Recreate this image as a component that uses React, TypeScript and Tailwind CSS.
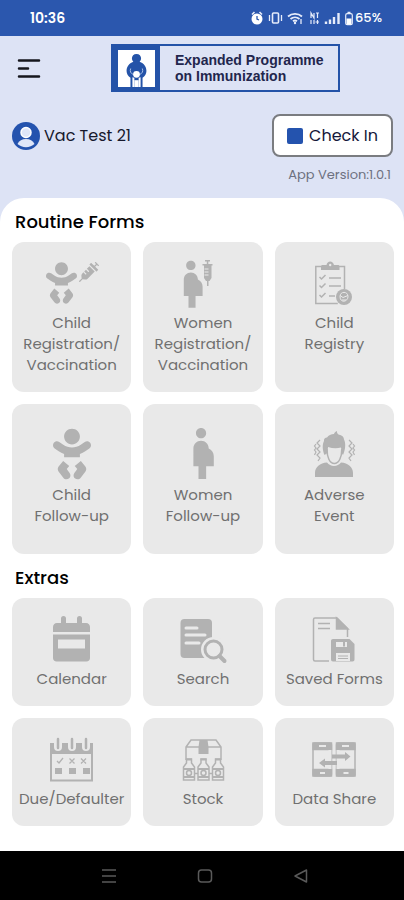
import React from 'react';
import { FaBaby, FaSyringe } from 'react-icons/fa';

interface Tile {
  label: string;
  icon: React.ReactNode;
}

const PREGNANT_PATH =
  'M9 4c0-1.11.89-2 2-2s2 .89 2 2-.89 2-2 2-2-.89-2-2zm7 9c-.01-1.34-.83-2.51-2-3 0-1.66-1.34-3-3-3s-3 1.34-3 3v7h2v5h3v-5h3v-4z';

/* ---------- Status bar ---------- */

const StatusIcons = () => (
  <svg width="104" height="18" viewBox="0 0 104 18" fill="none" stroke="#e6ecfa" aria-hidden="true">
    {/* alarm */}
    <circle cx="6" cy="10" r="5.5" fill="#fff" stroke="none" />
    <path d="M1 5.5 3.5 3M11 5.5 8.5 3" strokeWidth="1.6" />
    <path d="M6 7v3l2 1" stroke="#2b57ae" strokeWidth="1.3" />
    {/* vibrate */}
    <path d="M18.5 6v6M30.5 6v6" strokeWidth="1.3" />
    <rect x="21.5" y="4" width="6" height="10" rx="1" strokeWidth="1.6" />
    {/* wifi */}
    <path d="M37 7.5c4-3.6 10-3.6 14 0M39.5 10c2.6-2.3 6.4-2.3 9 0M42 12.3c1.2-1 2.8-1 4 0" strokeWidth="1.8" />
    <circle cx="44" cy="14" r="1.2" fill="#e6ecfa" stroke="none" />
    <path d="M50 10v5" strokeWidth="1.3" />
    {/* volte */}
    <path d="M60 9V4l3 5V4M65 4h3M66.5 4v5M60 15v-4M63 11v4M66.5 11v4M64.5 13h3.5" strokeWidth="1.2" />
    {/* signal */}
    <path d="M75 15v-2.5M79 15v-4.5M83 15V8M87.5 15V4" strokeWidth="2.4" />
    {/* battery */}
    <rect x="94.7" y="4.7" width="6.6" height="11" rx="1.5" strokeWidth="1.2" />
    <path d="M96.500 3.500h3" strokeWidth="1.500" />
    <rect x="95.5" y="9.5" width="5" height="6" fill="#fff" stroke="none" />
  </svg>
);

const StatusBar = () => (
  <div className="flex h-9 items-center justify-between bg-[#2b57ae] pr-[22px] pl-[30px] text-sm font-semibold text-white">
    <span>10:36</span>
    <span className="flex items-center">
      <StatusIcons />
      <span className="text-[13px] font-medium">65%</span>
    </span>
  </div>
);

/* ---------- Header ---------- */

const EpiLogo = () => (
  <div className="mr-16 flex h-12 flex-1 border-2 border-[#2453a8]">
    <div className="flex w-[47px] shrink-0 items-center justify-center bg-[#2453a8]">
      <svg width="37" height="37" viewBox="0 0 38 38" aria-hidden="true">
        <rect width="38" height="38" fill="#fff" />
        <path d="M19 4c3 0 4.700 2 4.700 4.600 0 1.500-.6 2.700-1.500 3.500 4.600 1.700 7 5.400 7 9.400 0 3-1.700 5.500-4 7V38h-2V28l-2 .5V38h-4.400v-9.500l-2-.5v10h-2v-9.500c-2.300-1.500-4-4-4-7 0-4 2.400-7.700 7-9.400-.9-.8-1.500-2-1.500-3.500C14.300 6 16 4 19 4Z" fill="#2453a8" />
        <path d="M16.800 31h4.400v7h-4.400z" fill="#fff" />
        <circle cx="19" cy="25" r="3.500" fill="#fff" />
        <path d="M13 19c-1 3 0 5 2.500 6M25 19c1 3 0 5-2.500 6" stroke="#a9bfe6" strokeWidth="1" fill="none" />
      </svg>
    </div>
    <p className="self-center pl-[15px] font-['Liberation_Sans',Arial,sans-serif] text-sm leading-4 font-bold whitespace-nowrap text-[#22264d]">
      Expanded Programme
      <br />
      on Immunization
    </p>
  </div>
);

const Avatar = () => (
  <svg width="28" height="28" viewBox="0 0 28 28" aria-hidden="true">
    <circle cx="14" cy="14" r="14" fill="#2453ae" />
    <circle cx="14" cy="10.5" r="5" fill="#dfe6f8" stroke="#fff" strokeWidth="1.5" />
    <path d="M5.500 22c1.500-3.500 4.700-5 8.500-5s7 1.500 8.500 5c-2.200 2-5.200 3.200-8.500 3.200S7.700 24 5.500 22Z" fill="#dfe6f8" />
  </svg>
);

const Header = () => (
  <header className="flex flex-col">
    <div className="flex items-center gap-[70px] pt-2 pl-[17px]">
      <button aria-label="Menu">
        <svg width="24" height="24" viewBox="0 0 24 24" stroke="#15161c" strokeWidth="2.5" strokeLinecap="round">
          <path d="M2 4.500h20M2 12.500h9M2 20.500h20" />
        </svg>
      </button>
      <EpiLogo />
    </div>

    <div className="mt-[22px] flex items-center justify-between pr-[11px] pl-3">
      <div className="flex items-center gap-1 text-base text-[#16182c]">
        <Avatar />
        <span>Vac Test 21</span>
      </div>
      <button className="flex h-[43px] items-center gap-1.5 rounded-lg border-2 border-[#7a7c80] bg-white px-[13px] text-base text-[#14173a]">
        <span className="h-4 w-4 rounded-xs bg-[#2453ae]" />
        Check In
      </button>
    </div>

    <p className="mt-2 pr-[13px] text-right text-[13px] leading-5 text-[#6d7180]">App Version:1.0.1</p>
  </header>
);

/* ---------- Tile icons ---------- */

const IconChildVaccine = () => (
  <div className="flex h-[52px] items-start gap-0.5 pt-1 pl-0.5">
    <FaBaby className="h-[42px] w-[31px]" />
    <FaSyringe className="h-[20px] w-[20px]" />
  </div>
);

const IconWomanVaccine = () => (
  <svg width="64" height="52" viewBox="0 0 64 52" fill="currentColor">
    <path transform="translate(-6 -2) scale(2.35)" d={PREGNANT_PATH} />
    <path d="M34 2h5v1.500h-5zM35.800 3h1.500v3h-1.500zM31.500 6h10v1.500h-10zM33 7.500h7.500V20l-2 3H35l-2-3zM36 23h1.500v5H36z" />
    <path d="M33.500 11h4M33.500 14h4M33.500 17h4" stroke="#e9e9e9" strokeWidth="1.2" />
  </svg>
);

const IconRegistry = () => (
  <svg width="64" height="52" viewBox="0 0 64 52" fill="none" stroke="currentColor" strokeWidth="1.5">
    <path d="M20 8.500h-6.200v37h22M36 8.500h6.500V31" />
    <path d="M19 12V8.500c0-.8.700-1.500 1.500-1.500h4C25 4.800 26.300 3.500 28.200 3.500S31.400 4.800 32 7h4c.8 0 1.500.7 1.500 1.500V12Z" fill="currentColor" stroke="none" />
    <circle cx="28.2" cy="7" r="1.2" fill="#e9e9e9" stroke="none" />
    <path d="m17.500 19 2 2 4-4M17.500 27.500l2 2 4-4M17.500 37l2 2 4-4M27 20h12M27 28h12M27 38h6" />
    <circle cx="42" cy="39" r="8" fill="currentColor" stroke="none" />
    <path d="M38 38.500c0-5.500 8-5.500 8 0s-8 7-8 0ZM38 37.500l3 2 5-2M40 42h4" stroke="#e9e9e9" strokeWidth="1" />
  </svg>
);

const IconBaby = () => (
  <div className="h-14 pt-0.5">
    <FaBaby className="h-[52px] w-[38px]" />
  </div>
);

const IconWoman = () => (
  <svg width="64" height="56" viewBox="0 0 64 56" fill="currentColor">
    <path transform="translate(2 -3) scale(2.55)" d={PREGNANT_PATH} />
  </svg>
);

const IconAdverse = () => (
  <svg width="64" height="56" viewBox="0 0 64 56" fill="currentColor">
    <path d="M13 51v-4c0-6 5-10 12-10.500 1.800 2.300 4.200 3.500 7 3.500s5.200-1.200 7-3.500c7 .5 12 4.500 12 10.500v4Z" />
    <path d="M22.500 29c-2-5-2.500-10-.5-14-.3-2 1-3.500 3-3.500 1.500-2.300 4-3.500 7-3.500.3-1.500 1.500-2.500 3-3-.2 1.500.3 2.500 1.500 3.500 3.500.5 5.500 2.500 5.500 5 2 4 1.500 10-1 15.500L39.500 27c0-2 0-4-.6-5.500-3.500 1-8.500 1-12.800-.5-.6 2-.6 4-.6 6Z" />
    <path d="M25 23c0 8 2.500 14.500 7.300 14.500S39.800 31 39.800 23" fill="none" stroke="currentColor" strokeWidth="1.5" />
    <path d="m18 14-3 3 3 3-3 3 3 3-3 3 3 3-2 3M14 18l-1.500 2 1.500 2-1.500 2 1.500 2-1.500 3M47 14l3 3-3 3 3 3-3 3 3 3-3 3 2 3M51 18l1.500 2-1.500 2 1.500 2-1.500 2 1.500 3" fill="none" stroke="currentColor" strokeWidth="1.2" />
  </svg>
);

const IconCalendar = () => (
  <svg width="64" height="56" viewBox="0 0 64 56" fill="currentColor">
    <path d="M13 22v-5c0-2 1.500-4 4-4h4V8.500a1.500 1.500 0 0 1 5 0V13h11V8.500a1.500 1.500 0 0 1 5 0V13h4c2.500 0 4 2 4 4v5Z" />
    <path fillRule="evenodd" d="M13 24.500h37V48c0 2-1.500 3.500-3.500 3.500h-30c-2 0-3.500-1.500-3.500-3.500ZM18 29.500v9h27v-9Z" />
  </svg>
);

const IconSearchDoc = () => (
  <svg width="64" height="56" viewBox="0 0 64 56" fill="currentColor">
    <rect x="9.5" y="9" width="31.5" height="39" rx="4" />
    <path d="M15 18h11M15 25h19M15 33h13" stroke="#e9e9e9" strokeWidth="3" strokeLinecap="round" />
    <circle cx="42.5" cy="39.5" r="12.5" fill="#e9e9e9" />
    <circle cx="42.5" cy="39.5" r="8.5" fill="#e9e9e9" stroke="currentColor" strokeWidth="3" />
    <path d="m48.500 46 5 5" stroke="currentColor" strokeWidth="4" strokeLinecap="round" />
  </svg>
);

const IconSavedForms = () => (
  <svg width="64" height="56" viewBox="0 0 64 56" fill="none" stroke="currentColor" strokeWidth="1.5">
    <path d="M27 51H13c-1 0-1.500-.5-1.500-1.500V9.500c0-1 .5-1.500 1.500-1.500h22l10.500 10.500V27" />
    <path d="M34.500 8v11H46Z" fill="currentColor" />
    <path d="M16 13.500h12M16 18.500h12" />
    <path d="M31 29h16.500l5 5v15.500c0 1.200-.8 2-2 2H31c-1.200 0-2-.8-2-2V31c0-1.200.8-2 2-2Z" fill="currentColor" stroke="none" />
    <path d="M34 32h11v5H34zM34 43h14v8H34z" fill="#e9e9e9" stroke="none" />
    <path d="M36 46h10M36 48.500h10" strokeWidth="1" />
    <path d="M42 31.500v5" strokeWidth="2" />
  </svg>
);

const IconDue = () => (
  <svg width="64" height="56" viewBox="0 0 64 56" fill="none" stroke="currentColor">
    <path d="M11 14v36.500h41V14" strokeWidth="2" />
    <path d="M10 13h43v11H10z" fill="currentColor" stroke="none" />
    {[18, 32, 46].map((x) => (
      <g key={x}>
        <path d={`M${x - 4} 12v5a4 4 0 0 0 8 0v-5z`} fill="#e9e9e9" stroke="none" />
        <path d={`M${x} 9v9`} strokeWidth="2.5" strokeLinecap="round" />
        <path d={`M${x - 3} 38h7v6h-7z`} fill="currentColor" stroke="none" />
      </g>
    ))}
    <path d="m17 31 2 2 4-5M29.500 28.500l5 5m0-5-5 5M41 28.500l5 5m0-5-5 5" strokeWidth="1.3" />
  </svg>
);

const IconStock = () => (
  <svg width="64" height="56" viewBox="0 0 64 56" fill="none" stroke="currentColor" strokeWidth="1.5">
    <path d="M15 30V17l5-7h25l5 7v13M15 17h35" />
    <path d="M28.500 10h8l1 7v7h-10v-7Z" fill="currentColor" stroke="none" />
    {[18, 32.5, 47].map((x) => (
      <g key={x}>
        <path d={`M${x - 2.5} 29h5v4l3 4v13h-11V37l3-4z`} fill="#e9e9e9" />
        <path d={`M${x - 3} 29.500h6M${x - 5.5} 39h11M${x - 5.5} 47h11`} strokeWidth="2" />
        <circle cx={x} cy="43" r="2.5" />
      </g>
    ))}
    <path d="M23.500 43.500H27M38 43.500h3.500" />
  </svg>
);

const IconShare = () => (
  <svg width="64" height="56" viewBox="0 0 64 56" fill="none" stroke="currentColor" strokeWidth="1.5">
    <rect x="11" y="13" width="18.5" height="33" rx="2" />
    <rect x="34.5" y="13" width="18.5" height="33" rx="2" />
    <path d="M11 13h18.500v6.500H11zM11 39.500h18.500V46H11zM34.500 13H53v6.500H34.500zM34.500 39.500H53V46H34.500z" fill="currentColor" />
    <path d="M17 16h7M40 16h7M18 43h5M41.500 43h5" stroke="#e9e9e9" strokeWidth="1.8" />
    <path d="M28 20v19M36 20v19" stroke="#e9e9e9" strokeWidth="3" />
    <path d="M30 24.500h13V22l5.500 4.500L43 31v-2.500H30zM35 31H23v-2.500L17 33l6 4.500V35h12z" fill="currentColor" stroke="none" />
  </svg>
);

/* ---------- Tiles ---------- */

const registration: Tile[] = [
  { label: 'Child\nRegistration/\nVaccination', icon: <IconChildVaccine /> },
  { label: 'Women\nRegistration/\nVaccination', icon: <IconWomanVaccine /> },
  { label: 'Child\nRegistry', icon: <IconRegistry /> },
];

const followUp: Tile[] = [
  { label: 'Child\nFollow-up', icon: <IconBaby /> },
  { label: 'Women\nFollow-up', icon: <IconWoman /> },
  { label: 'Adverse\nEvent', icon: <IconAdverse /> },
];

const extras: Tile[] = [
  { label: 'Calendar', icon: <IconCalendar /> },
  { label: 'Search', icon: <IconSearchDoc /> },
  { label: 'Saved Forms', icon: <IconSavedForms /> },
  { label: 'Due/Defaulter', icon: <IconDue /> },
  { label: 'Stock', icon: <IconStock /> },
  { label: 'Data Share', icon: <IconShare /> },
];

const TileGrid = ({ tiles, tileClass }: { tiles: Tile[]; tileClass: string }) => (
  <div className="grid grid-cols-3 gap-3">
    {tiles.map((tile) => (
      <button
        key={tile.label}
        className={`flex flex-col items-center gap-0.5 rounded-xl bg-[#e9e9e9] text-[#b2b2b2] ${tileClass}`}
      >
        {tile.icon}
        <span className="text-[15px] leading-[21px] whitespace-pre-line text-[#707070]">{tile.label}</span>
      </button>
    ))}
  </div>
);

/* ---------- Bottom navigation ---------- */

const NavBar = () => (
  <nav className="mt-auto flex h-[49px] items-center justify-center gap-20 bg-black pl-1.5 text-[#5a5a5a]">
    <button aria-label="Recent apps">
      <svg width="16" height="16" viewBox="0 0 16 16" stroke="currentColor" strokeWidth="1.5">
        <path d="M1 2h14M1 8h14M1 14h14" />
      </svg>
    </button>
    <button aria-label="Home">
      <svg width="16" height="16" viewBox="0 0 16 16" fill="none" stroke="currentColor" strokeWidth="1.5">
        <rect x="1.5" y="2" width="13" height="12" rx="3" />
      </svg>
    </button>
    <button aria-label="Back">
      <svg width="16" height="16" viewBox="0 0 16 16" fill="none" stroke="currentColor" strokeWidth="1.5" strokeLinejoin="round">
        <path d="M13.500 2v12L2 8Z" />
      </svg>
    </button>
  </nav>
);

export default function App() {
  return (
    <div className="flex min-h-screen flex-col bg-[#dde3f5] font-[Poppins,Inter,sans-serif]">
      <StatusBar />
      <Header />

      <main className="mt-[13px] flex-1 rounded-t-3xl bg-white pt-3 pr-2.5 pb-4 pl-3">
        <h2 className="mb-2 pl-[3px] text-lg leading-6 font-medium text-black">Routine Forms</h2>
        <div className="flex flex-col gap-3">
          <TileGrid tiles={registration} tileClass="min-h-[150px] pt-4" />
          <TileGrid tiles={followUp} tileClass="min-h-[150px] pt-[22px]" />
        </div>
        <h2 className="mt-3 mb-2 pl-[3px] text-lg leading-6 font-medium text-black">Extras</h2>
        <TileGrid tiles={extras} tileClass="min-h-[108px] pt-3" />
      </main>

      <NavBar />
    </div>
  );
}
